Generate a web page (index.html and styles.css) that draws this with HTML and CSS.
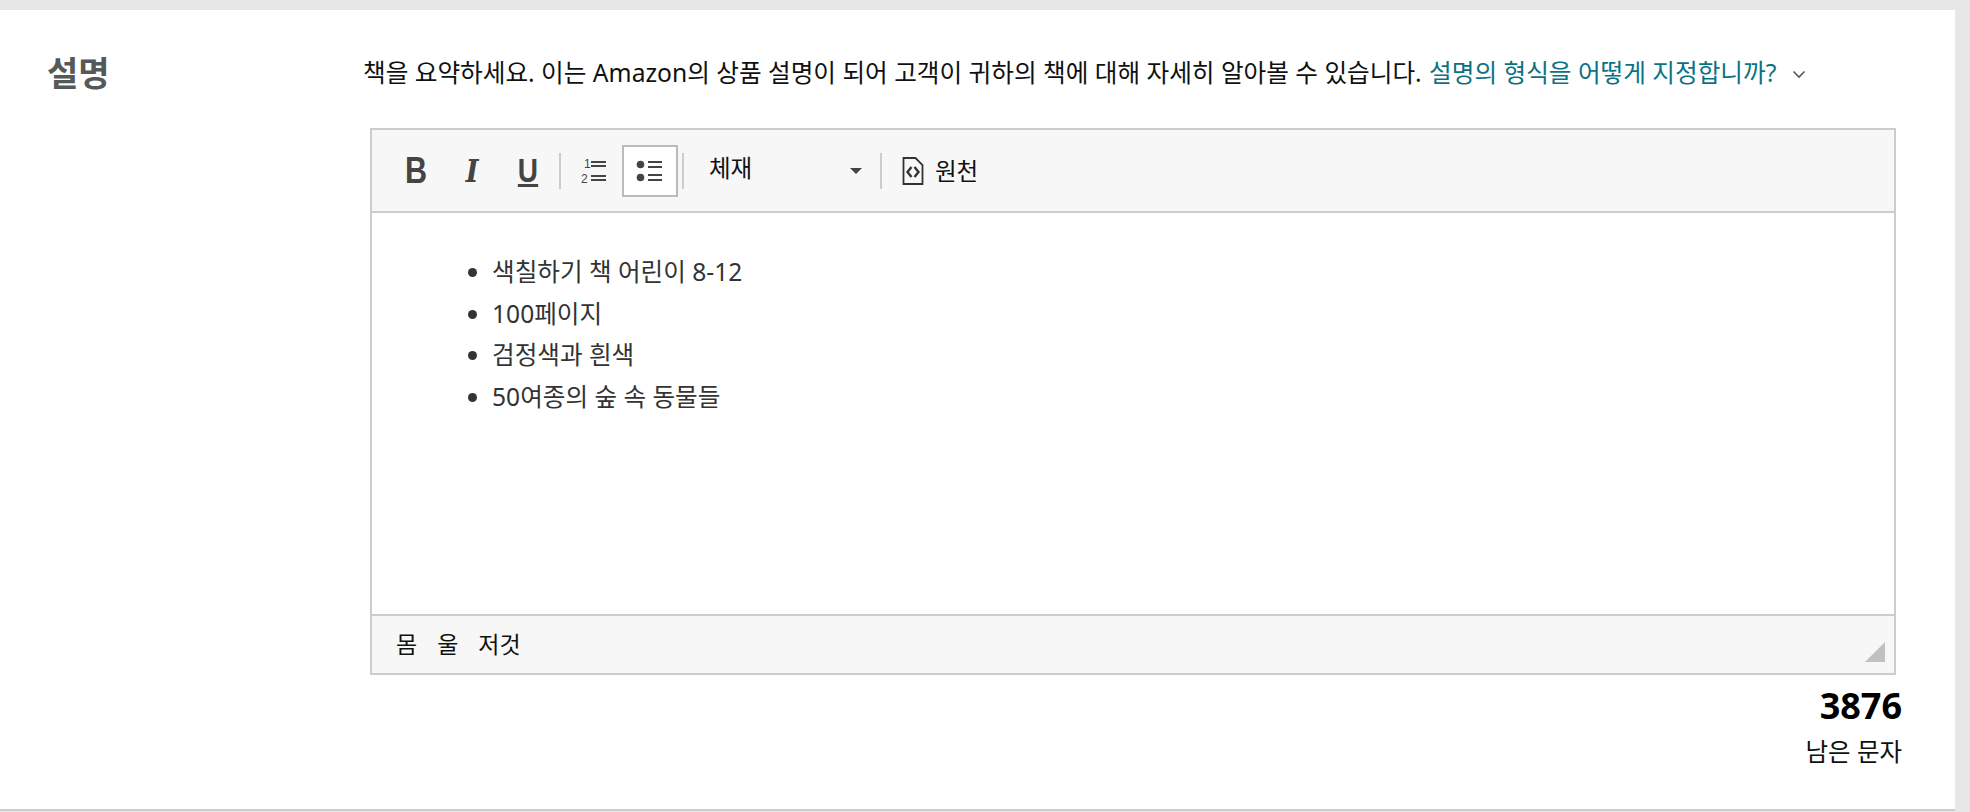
FILE: index.html
```html
<!DOCTYPE html>
<html lang="ko">
<head>
  <meta charset="UTF-8" />
  <title>설명</title>
  <link rel="stylesheet" href="styles.css">
</head>
<body>
  <div class="card">
    <h2 class="label">설명</h2>
    <div class="content">
      <p class="intro">
        책을 요약하세요. 이는 Amazon의 상품 설명이 되어 고객이 귀하의 책에 대해 자세히 알아볼 수 있습니다.
        <a href="#" class="help">설명의 형식을 어떻게 지정합니까?</a>
        <svg class="chevron" width="14" height="9" viewBox="0 0 14 9"><path d="M1.5 1.5 7 7l5.5-5.5" fill="none" stroke="#565959" stroke-width="1.6"/></svg>
      </p>

      <div class="editor">
        <div class="toolbar">
          <button class="tool tool-b">B</button>
          <button class="tool tool-i">I</button>
          <button class="tool tool-u">U</button>
          <span class="sep"></span>
          <button class="tool">
            <svg width="26" height="28" viewBox="0 0 26 28">
              <text x="3" y="11" class="num">1</text>
              <text x="0" y="26" class="num">2</text>
              <path d="M10 5h15M10 9h15M10 19h15M10 23h15" stroke="#444" stroke-width="2"/>
            </svg>
          </button>
          <button class="tool active">
            <svg width="28" height="26" viewBox="0 0 28 26">
              <circle cx="4.5" cy="6.5" r="3.8" fill="#444"/>
              <circle cx="4.5" cy="19.5" r="3.8" fill="#444"/>
              <path d="M12 4h14M12 9h14M12 17h14M12 22h14" stroke="#444" stroke-width="2"/>
            </svg>
          </button>
          <span class="sep sep-tight"></span>
          <div class="format">
            <span class="format-name">체재</span>
            <span class="caret"></span>
          </div>
          <span class="sep"></span>
          <div class="source">
            <svg width="22" height="28" viewBox="0 0 22 28">
              <path d="M1.5 1h12l7 7v19h-19z" fill="none" stroke="#333" stroke-width="1.8"/>
              <path d="M9.5 10l-4 5 4 5M12.5 10l4 5-4 5" fill="none" stroke="#333" stroke-width="2.4"/>
            </svg>
            <span class="source-name">원천</span>
          </div>
        </div>

        <div class="editor-body">
          <ul>
            <li>색칠하기 책 어린이 8-12</li>
            <li>100페이지</li>
            <li>검정색과 흰색</li>
            <li>50여종의 숲 속 동물들</li>
          </ul>
        </div>

        <div class="editor-foot">
          <div class="crumbs">
            <span>몸</span>
            <span>울</span>
            <span>저것</span>
          </div>
          <span class="grip"></span>
        </div>
      </div>

      <div class="counter">
        <div class="count">3876</div>
        <div class="count-label">남은 문자</div>
      </div>
    </div>
  </div>
</body>
</html>
```

FILE: styles.css
```css
body {
  margin: 0;
  padding-top: 10px;
  background-color: #e7e7e7;
  color: #0f1111;
  font-family: 'Noto Sans', 'Noto Sans CJK KR', sans-serif;
  overflow: hidden;
}

.card {
  display: flex;
  width: 1955px;
  height: 801px;
  box-sizing: border-box;
  background-color: #fff;
  border-bottom: 2px solid #ccc;
}

.label {
  width: 363px;
  flex: none;
  box-sizing: border-box;
  margin: 0;
  padding: 41px 0 0 47px;
  font-size: 34px;
  line-height: 44px;
  font-weight: 700;
  color: #565959;
}

.content {
  width: 1592px;
  flex: none;
}

.intro {
  margin: 0;
  padding-top: 40px;
  font-size: 24.65px;
  line-height: 46px;
  white-space: nowrap;
}

.help {
  color: #0b7285;
  text-decoration: none;
  margin-left: 1px;
}

.chevron {
  margin-left: 9px;
  margin-bottom: 3px;
}

.editor {
  width: 1526px;
  height: 547px;
  margin: 32px 0 0 7px;
  box-sizing: border-box;
  display: flex;
  flex-direction: column;
  border: 2px solid #ccc;
}

.toolbar {
  display: flex;
  align-items: center;
  height: 83px;
  flex: none;
  box-sizing: border-box;
  padding-left: 16px;
  background-color: #f7f7f7;
  border-bottom: 2px solid #ccc;
  font-size: 23.5px;
}

.tool {
  width: 56px;
  height: 52px;
  padding: 0;
  display: flex;
  align-items: center;
  justify-content: center;
  background: none;
  border: 2px solid transparent;
  color: #444;
  font-size: 36px;
  line-height: 1;
}

.tool-b {
  font-family: 'Liberation Sans', sans-serif;
  font-weight: 700;
  transform: scaleX(0.85);
}

.tool-i {
  font-family: 'DejaVu Serif', serif;
  font-size: 32px;
  font-style: italic;
  font-weight: 700;
  transform: scaleX(0.85);
}

.tool-u {
  font-family: 'Liberation Sans', sans-serif;
  font-weight: 700;
  font-size: 33px;
  text-decoration: underline;
  text-underline-offset: 2px;
  transform: scaleX(0.85);
}

.tool.active {
  background-color: #fff;
  border-color: #bbb;
}

.num {
  font-family: 'Liberation Sans', sans-serif;
  font-size: 12px;
  fill: #444;
}

.sep {
  width: 2px;
  height: 36px;
  flex: none;
  margin: 0 5px 0 3px;
  background-color: #ccc;
}

.sep-tight {
  margin: 0 3px 0 4px;
}

.format {
  width: 190px;
  box-sizing: border-box;
  display: flex;
  align-items: center;
  justify-content: space-between;
  padding: 0 15px 0 22px;
}

.format-name {
  margin-bottom: 7px;
}

.caret {
  border-left: 6px solid transparent;
  border-right: 6px solid transparent;
  border-top: 6px solid #444;
  margin-top: 1px;
}

.source {
  display: flex;
  align-items: center;
  gap: 11px;
  margin-left: 15px;
}

.source-name {
  margin-bottom: 1px;
}

.editor-body {
  flex: 1;
  padding: 38px 0 0 120px;
  font-size: 24.6px;
  line-height: 41.7px;
  color: #333;
}

.editor-body ul {
  margin: 0;
  padding: 0;
}

.editor-foot {
  display: flex;
  align-items: center;
  justify-content: space-between;
  height: 59px;
  flex: none;
  box-sizing: border-box;
  padding: 0 9px 4px 24px;
  background-color: #f7f7f7;
  border-top: 2px solid #ccc;
  font-size: 23px;
}

.crumbs {
  display: flex;
  gap: 20px;
}

.grip {
  width: 20px;
  height: 20px;
  margin-top: 19px;
  background-color: #c0c0c0;
  clip-path: polygon(100% 0, 100% 100%, 0 100%);
}

.counter {
  width: 1539px;
  text-align: right;
}

.count {
  margin-top: 9px;
  font-size: 36px;
  line-height: 44px;
  font-weight: 700;
  color: #000;
}

.count-label {
  margin-top: 4px;
  font-size: 24.5px;
  line-height: 40px;
}
```
